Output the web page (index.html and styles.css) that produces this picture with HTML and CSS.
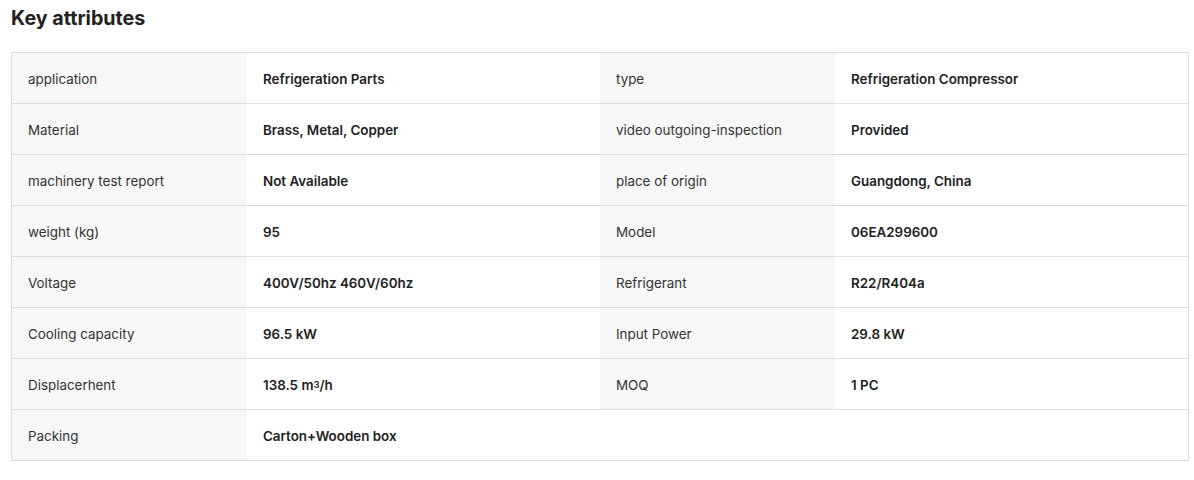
FILE: index.html
```html
<html>
<head>
	<link rel="stylesheet" href="styles.css">
	<title>Key attributes</title>
</head>
<body>
	<div class="attrs">
		<h2 class="attrs-title">Key attributes</h2>
		<div class="attrs-table">
			<div class="attrs-row">
				<div class="attr-name">application</div><div class="attr-value">Refrigeration Parts</div>
				<div class="attr-name">type</div><div class="attr-value">Refrigeration Compressor</div>
			</div>
			<div class="attrs-row">
				<div class="attr-name">Material</div><div class="attr-value">Brass, Metal, Copper</div>
				<div class="attr-name">video outgoing-inspection</div><div class="attr-value">Provided</div>
			</div>
			<div class="attrs-row">
				<div class="attr-name">machinery test report</div><div class="attr-value">Not Available</div>
				<div class="attr-name">place of origin</div><div class="attr-value">Guangdong, China</div>
			</div>
			<div class="attrs-row">
				<div class="attr-name">weight (kg)</div><div class="attr-value">95</div>
				<div class="attr-name">Model</div><div class="attr-value">06EA299600</div>
			</div>
			<div class="attrs-row">
				<div class="attr-name">Voltage</div><div class="attr-value">400V/50hz 460V/60hz</div>
				<div class="attr-name">Refrigerant</div><div class="attr-value">R22/R404a</div>
			</div>
			<div class="attrs-row">
				<div class="attr-name">Cooling capacity</div><div class="attr-value">96.5 kW</div>
				<div class="attr-name">Input Power</div><div class="attr-value">29.8 kW</div>
			</div>
			<div class="attrs-row">
				<div class="attr-name">Displacerhent</div><div class="attr-value">138.5 m<sup>3</sup>/h</div>
				<div class="attr-name">MOQ</div><div class="attr-value">1 PC</div>
			</div>
			<div class="attrs-row">
				<div class="attr-name">Packing</div><div class="attr-value">Carton+Wooden box</div>
				<div class="attr-empty"></div><div class="attr-empty"></div>
			</div>
		</div>
	</div>
</body>
</html>
```

FILE: styles.css
```css
html,body{
	margin: 0;
	background-color: #fff;
	font-family: Inter, 'Noto Sans', sans-serif;
	color: #222;
}
.attrs{
	padding: 6px 6px 0 11px;
}
.attrs-title{
	margin: 0 0 22px 0;
	font-size: 19.7px;
	line-height: 24px;
	font-weight: 700;
	color: #222;
}
.attrs-table{
	width: 1176px;
	border: 1px solid #ddd;
}
.attrs-row{
	display: grid;
	grid-template-columns: 235px 353px 235px 353px;
	height: 50px;
	border-top: 1px solid #ddd;
}
.attrs-row:first-child{
	border-top: 0;
}
.attr-name,.attr-value{
	display: flex;
	align-items: center;
	padding: 1px 0 0 16px;
	font-size: 13.4px;
}
.attr-name{
	background-color: #f7f7f7;
	color: #333;
}
.attr-value{
	font-weight: 600;
	color: #222;
}
.attr-value sup{
	font-size: 9.5px;
	line-height: 0;
	vertical-align: 6px;
}
```
